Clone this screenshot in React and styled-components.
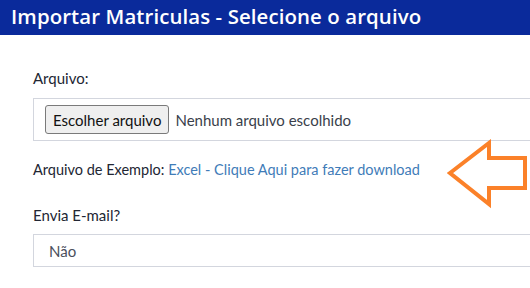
import React from 'react';
import styled, { createGlobalStyle } from 'styled-components';

const Global = createGlobalStyle`
  html, body {
    margin: 0;
    padding: 0;
    overflow: hidden;
    background: #ffffff;
  }
  body {
    font-family: "Lato", "Open Sans", sans-serif;
  }
`

const Page = styled.div`
  position: relative;
  width: 530px;
  height: 288px;
  overflow: hidden;
`

const Header = styled.div`
  height: 35px;
  background: #0a2a9b;
  color: #ffffff;
  display: flex;
  align-items: center;
  padding-left: 11px;
  font-family: "Open Sans", sans-serif;
  font-weight: 600;
  font-size: 20.4px;
  letter-spacing: 0.1px;
  box-sizing: border-box;
  padding-bottom: 3px;
`

const Form = styled.div`
  padding: 34px 0 0 33px;
  width: 620px;
`

const Label = styled.div`
  font-size: 15px;
  color: #222633;
  line-height: 18px;
  margin-bottom: ${p => p.gap || 10}px;
`

const FileBox = styled.div`
  height: 43px;
  box-sizing: border-box;
  border: 1px solid #d3d6de;
  display: flex;
  align-items: center;
  padding-left: 11px;
  gap: 6px;
  font-size: 15px;
  color: #3a3f4b;
`

const FileButton = styled.button`
  height: 29px;
  padding: 0 7px;
  background: #efefef;
  border: 1px solid #7a7a7a;
  border-radius: 3px;
  font-family: "Lato", sans-serif;
  font-size: 15px;
  color: #111;
`

const ExampleRow = styled.div`
  margin-top: 20px;
  margin-bottom: 27px;
  font-size: 14.5px;
  color: #222633;
  line-height: 18px;
`

const Link = styled.a`
  color: #3f7cb8;
  text-decoration: none;
`

const Select = styled.div`
  height: 33px;
  box-sizing: border-box;
  border: 1px solid #d3d6de;
  display: flex;
  align-items: center;
  padding-left: 15px;
  font-size: 15px;
  color: #4a4f5c;
`

const Arrow = styled.svg`
  position: absolute;
  left: 447px;
  top: 139px;
`

export default function App() {
  return (
    <Page>
      <Global />
      <Header>Importar Matriculas - Selecione o arquivo</Header>
      <Form>
        <Label gap={11}>Arquivo:</Label>
        <FileBox>
          <FileButton>Escolher arquivo</FileButton>
          <span>Nenhum arquivo escolhido</span>
        </FileBox>
        <ExampleRow>
          Arquivo de Exemplo: <Link href="#">Excel - Clique Aqui para fazer download</Link>
        </ExampleRow>
        <Label gap={10}>Envia E-mail?</Label>
        <Select>Não</Select>
      </Form>
      <Arrow width="84" height="70" viewBox="0 0 84 70">
        <path
          d="M3 34 L42 4 L42 19 L78 19 L78 49 L42 49 L42 65 Z"
          fill="none"
          stroke="#fb8129"
          strokeWidth="4"
          strokeLinejoin="miter"
        />
      </Arrow>
    </Page>
  );
}
